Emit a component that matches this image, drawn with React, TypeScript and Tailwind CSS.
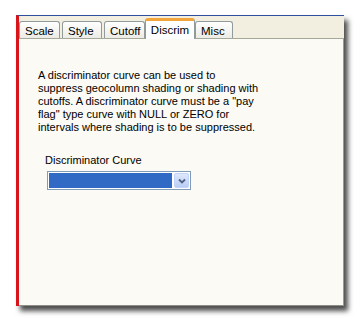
import React from "react";

const tabs = [
  { label: "Scale", w: "w-[41px]" },
  { label: "Style", w: "w-[40px]" },
  { label: "Cutoff", w: "w-[41px]" },
  { label: "Discrim", w: "w-[50px]" },
  { label: "Misc", w: "w-[38px]" },
];

const lines = [
  "A discriminator curve can be used to",
  "suppress geocolumn shading or shading with",
  "cutoffs. A discriminator curve must be a \"pay",
  "flag\" type curve with NULL or ZERO for",
  "intervals where shading is to be suppressed.",
];

export default function App() {
  const active = "Discrim";

  return (
    <div className="w-[363px] h-[323px] bg-white pt-[15px] pl-[16px]" style={{ fontFamily: '"Liberation Sans", Tahoma, sans-serif' }}>
      <div className="w-[328px] h-[291px] flex flex-col border-t border-t-[#2f4f9e] border-l-[3px] border-l-[#d8141b] bg-[#fbfaf5] shadow-[4px_5px_5px_rgba(0,0,0,0.7)]">
        {/* tab strip */}
        <div className="h-[23px] bg-[#f2efe0] flex items-end gap-[2px] border-b border-b-[#a5a99c]">
          {tabs.map((t) =>
            t.label === active ? (
              <div
                key={t.label}
                className={`${t.w} -ml-[2px] -mr-[2px] h-[21px] -mb-[1px] pt-[2px] text-center bg-white border-x border-[#919b9c] border-t-[3px] border-t-[#f2a53a] rounded-t-[3px] text-[11.5px] text-black leading-[14px]`}
              >
                {t.label}
              </div>
            ) : (
              <div
                key={t.label}
                className={`${t.w} h-[17px] pt-[2px] pl-[5px] bg-gradient-to-b from-white to-[#ecebe5] border border-b-0 border-[#919b9c] rounded-t-[3px] text-[11.5px] text-black leading-[14px]`}
              >
                {t.label}
              </div>
            )
          )}
        </div>

        {/* page body */}
        <div className="flex-1 border-r border-r-[#9a9a92] border-b border-b-[#8e8e86] pl-[19px] pt-[30px]">
          <p className="text-[11px] leading-[13px] text-black whitespace-nowrap">
            {lines.map((l) => (
              <span key={l} className="block">{l}</span>
            ))}
          </p>

          <div className="mt-[20px] pl-[7px]">
            <div className="text-[11px] leading-[13px] text-black">Discriminator Curve</div>
            <div className="mt-[4px] ml-[2px] w-[144px] h-[19px] border border-[#7f9db9] bg-white flex items-center p-[1px] gap-[2px]">
              <div className="flex-1 h-full bg-[#316ac5]" />
              <div className="w-[15px] h-full rounded-[2px] bg-gradient-to-b from-[#dfe8fb] to-[#b9cdf4] border border-[#c3d3fd] flex items-center justify-center">
                <svg width="8" height="6" viewBox="0 0 8 6">
                  <path d="M1 1.5 L4 4.5 L7 1.5" fill="none" stroke="#4d6185" strokeWidth="1.8" />
                </svg>
              </div>
            </div>
          </div>
        </div>
      </div>
    </div>
  );
}
